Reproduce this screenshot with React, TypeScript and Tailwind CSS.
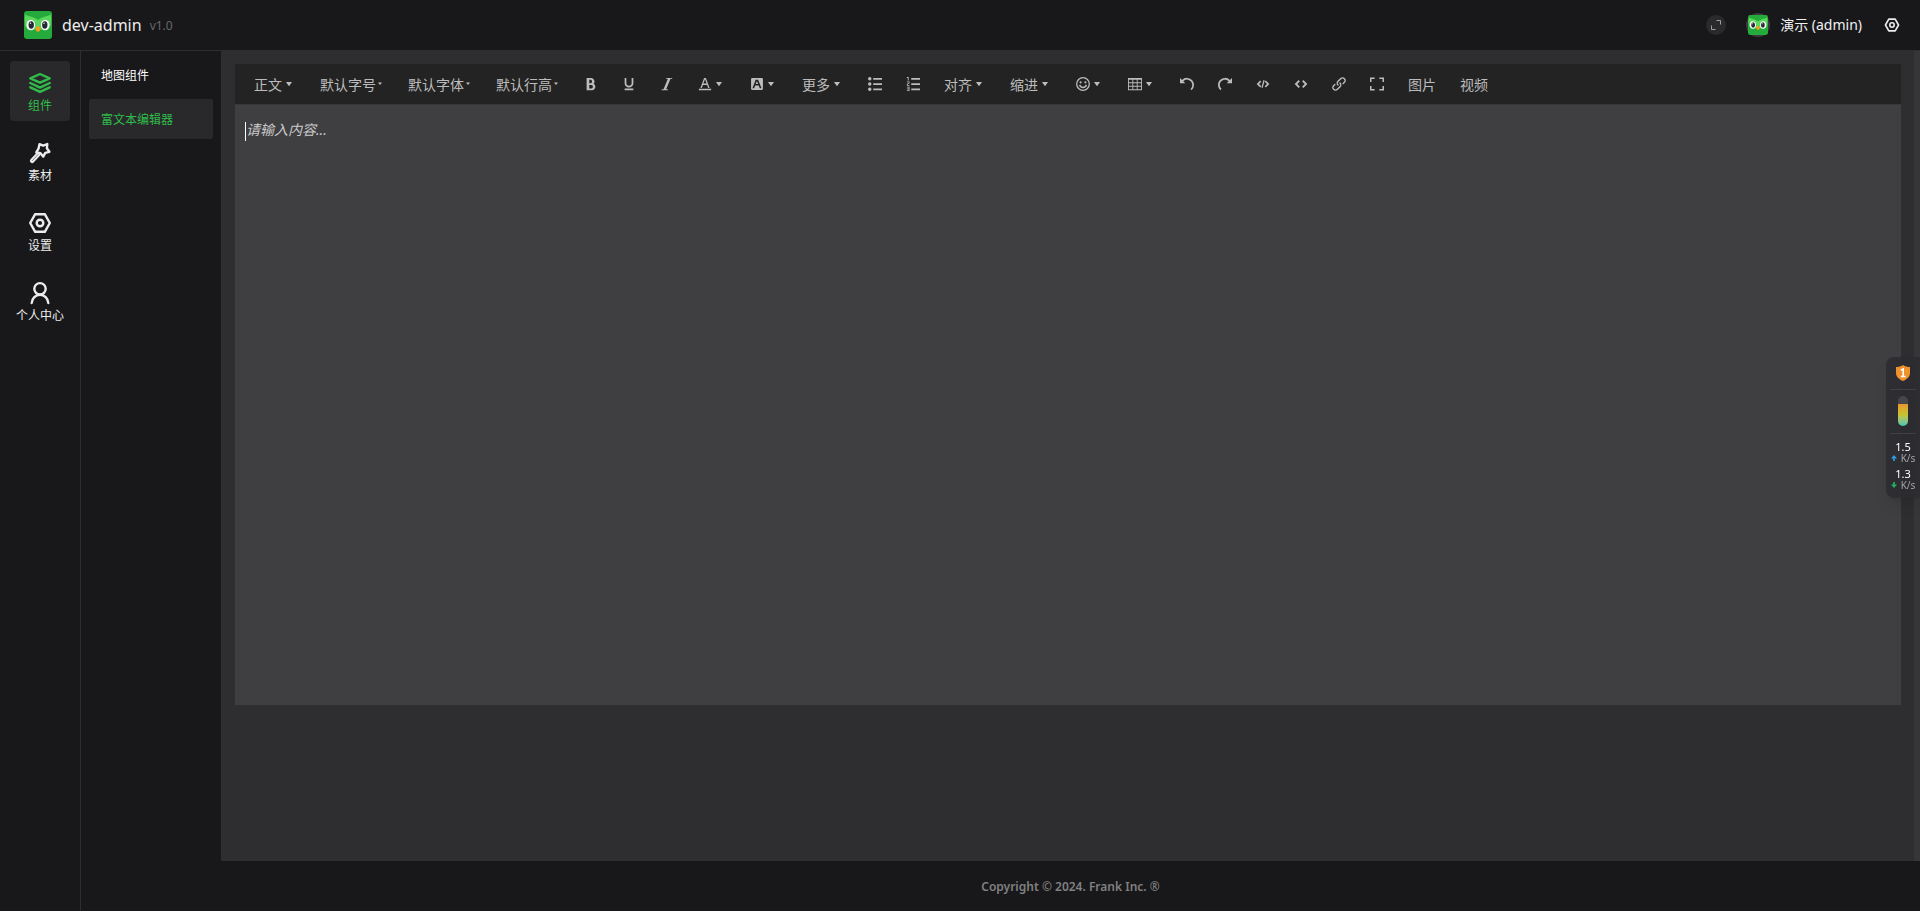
import type { ReactNode } from "react";

const ARROW =
  "M498.7 655.8l-197.6-268c-8.1-10.9-0.3-26.4 13.3-26.4h395.2c13.6 0 21.4 15.4 13.3 26.4l-197.6 268c-6.6 9-20 9-26.6 0z";

const PATHS = {
  bold: "M707.872 484.64A254.88 254.88 0 0 0 768 320c0-141.152-114.848-256-256-256H192v896h384c141.152 0 256-114.848 256-256a256.096 256.096 0 0 0-124.128-219.36zM384 192h101.504c55.968 0 101.504 57.408 101.504 128s-45.536 128-101.504 128H384V192z m159.008 640H384v-256h159.008c58.464 0 106.016 57.408 106.016 128s-47.552 128-106.016 128z",
  underline:
    "M704 64l128 0 0 416c0 159.072-143.264 288-320 288-176.736 0-320-128.928-320-288l0-416 128 0 0 416c0 40.16 18.24 78.688 51.36 108.512 36.896 33.216 86.848 51.488 140.64 51.488 53.792 0 103.744-18.304 140.64-51.488 33.12-29.792 51.36-68.352 51.36-108.512l0-416zM192 832l640 0 0 128-640 0z",
  italic: "M896 64v64h-128L448 896h128v64H128v-64h128L576 128h-128V64z",
  color:
    "M64 864h896v96H64zM360.58 576h302.85l81.53 224h102.16L579.24 64H444.77L176.89 800h102.16l81.53-224zM512 159.96L628.49 480H395.52L512 159.96z",
  background:
    "M510.03 315.08l84.68 196.92h-177.23l76.8-196.92h15.75zM945.23 157.54v708.92c0 43.32-35.45 78.77-78.77 78.77H157.54c-43.32 0-78.77-35.45-78.77-78.77V157.54c0-43.32 35.45-78.77 78.77-78.77h708.92c43.32 0 78.77 35.45 78.77 78.77z m-108.31 643.94L600.62 216.62c-5.91-11.82-15.75-19.7-29.54-19.7h-139.82c-11.81 0-23.63 7.88-27.57 19.7l-216.61 584.86c-3.94 11.81 3.94 25.6 17.72 25.6h80.74c11.81 0 23.63-9.85 27.57-21.66l63.01-175.26h263.88l68.92 175.26c3.94 11.81 15.76 21.66 27.57 21.66h80.74c11.81 0 23.63-11.82 19.69-25.6z",
  bullets:
    "M384 64h640v128H384V64z m0 384h640v128H384v-128z m0 384h640v128H384v-128zM0 128a128 128 0 1 1 256 0 128 128 0 0 1-256 0z m0 384a128 128 0 1 1 256 0 128 128 0 0 1-256 0z m0 384a128 128 0 1 1 256 0 128 128 0 0 1-256 0z",
  numbers:
    "M384 832h640v128H384z m0-384h640v128H384z m0-384h640v128H384zM192 0v256H128V64H64V0zM128 526.016v50.016h128v64H64v-146.016l128-60V384H64v-64h192v146.016zM256 704v320H64v-64h128v-64H64v-64h128v-64H64v-64z",
  table:
    "M0 64v896h1024V64H0z m384 576v-192h256v192h-256z m256 64v192h-256v-192h256z m0-512v192h-256V192h256zM320 192v192H64V192h256z m-256 256h256v192H64v-192z m640 0h256v192h-256v-192z m0-64V192h256v192h-256zM64 704h256v192H64v-192z m640 192v-192h256v192h-256z",
  undo: "M512 64A510.272 510.272 0 0 0 149.984 213.984L0.032 64v384h384L240.512 304.48A382.784 382.784 0 0 1 512.032 192c212.064 0 384 171.936 384 384 0 114.688-50.304 217.632-130.016 288l84.672 96a510.72 510.72 0 0 0 173.344-384c0-282.784-229.216-512-512-512z",
  redo: "M0 576a510.72 510.72 0 0 0 173.344 384l84.672-96A383.136 383.136 0 0 1 128 576C128 363.936 299.936 192 512 192c106.048 0 202.048 42.976 271.52 112.48L640 448h384V64l-149.984 149.984A510.272 510.272 0 0 0 512 64C229.216 64 0 293.216 0 576z",
  code: "M304 260l84 84-168 168 168 168-84 84L48 512zM720 260l-84 84 168 168-168 168 84 84 256-252zM544 228l90 24-148 548-90-24z",
  codeBlock: "M592 704l96 96 288-288-288-288-96 96 192 192zM432 320l-96-96L48 512l288 288 96-96-192-192z",
  link: "M440.224 635.776a51.84 51.84 0 0 1-36.768-15.232c-95.136-95.136-95.136-249.92 0-345.056l192-192C641.536 37.408 702.816 12.032 768 12.032s126.432 25.376 172.544 71.456c95.136 95.136 95.136 249.92 0 345.056l-87.776 87.776a51.968 51.968 0 1 1-73.536-73.536l87.776-87.776a140.16 140.16 0 0 0 0-197.984c-26.432-26.432-61.6-40.992-99.008-40.992s-72.544 14.56-99.008 40.992l-192 192a140.16 140.16 0 0 0 0 197.984 51.968 51.968 0 0 1-36.768 88.768zM256 1012a242.4 242.4 0 0 1-172.544-71.456c-95.136-95.136-95.136-249.92 0-345.056l87.776-87.776a51.968 51.968 0 1 1 73.536 73.536l-87.776 87.776a140.16 140.16 0 0 0 0 197.984c26.432 26.432 61.6 40.992 99.008 40.992s72.544-14.56 99.008-40.992l192-192a140.16 140.16 0 0 0 0-197.984 51.968 51.968 0 1 1 73.536-73.536c95.136 95.136 95.136 249.92 0 345.056l-192 192A242.4 242.4 0 0 1 256 1012z",
  fullscreen:
    "M0 32h340v110H110v230H0zM684 32h340v340H914V142H684zM0 652h110v230h230v110H0zM914 652h110v340H684V882h230z",
};

function Glyph({ d }: { d: string }) {
  return (
    <svg className="size-3.5 shrink-0" viewBox="0 0 1024 1024" fill="currentColor" aria-hidden="true">
      <path d={d} />
    </svg>
  );
}

function SmileGlyph() {
  return (
    <svg className="size-3.5 shrink-0" viewBox="0 0 14 14" fill="none" stroke="currentColor" aria-hidden="true">
      <circle cx="7" cy="7" r="6.300" strokeWidth="1.300" />
      <circle cx="4.600" cy="5.300" r="1.100" fill="currentColor" stroke="none" />
      <circle cx="9.400" cy="5.300" r="1.100" fill="currentColor" stroke="none" />
      <path d="M3.700 7.900a3.400 3.400 0 0 0 6.600 0" strokeWidth="1.500" />
    </svg>
  );
}

function Owl({ className }: { className: string }) {
  return (
    <svg className={className} viewBox="0 0 28 28" aria-hidden="true">
      <rect width="28" height="28" rx="3" fill="#25ab3b" />
      <path
        d="M1.500 3.500C5 6 9.500 5.200 14 9c4.500-3.800 9-3 12.500-5.500 1 3.500.8 6 .4 8.500.3 6-5.400 8.500-9.400 6.500h-7C6.500 20.500.8 18 1.100 12c-.4-2.500-.6-5 .4-8.500z"
        fill="#5bd75c"
      />
      <ellipse cx="6.800" cy="14" rx="4.300" ry="5.300" fill="#fff" />
      <ellipse cx="21.200" cy="14" rx="4.300" ry="5.300" fill="#fff" />
      <ellipse cx="7.200" cy="14" rx="2.700" ry="3.700" fill="#222a34" />
      <ellipse cx="20.800" cy="14" rx="2.700" ry="3.700" fill="#222a34" />
      <circle cx="6.500" cy="12.300" r="0.700" fill="#fff" />
      <circle cx="20" cy="12.300" r="0.700" fill="#fff" />
      <path d="M11.500 17c.5-2 4.500-2 5 0 .3 1.500-1.200 3.700-2.500 4-1.300-.3-2.800-2.500-2.500-4z" fill="#f59a23" />
    </svg>
  );
}

function Stroke({ children, className = "size-6" }: { children: ReactNode; className?: string }) {
  return (
    <svg
      className={className}
      viewBox="0 0 24 24"
      fill="none"
      stroke="currentColor"
      strokeWidth="2.400"
      strokeLinejoin="round"
      strokeLinecap="round"
      aria-hidden="true"
    >
      {children}
    </svg>
  );
}

function HexGear({ className }: { className?: string }) {
  return (
    <Stroke className={className}>
      <path d="M7.200 3.200h9.600L21.800 12l-5 8.800H7.200L2.200 12z" />
      <circle cx="12" cy="12" r="3.300" />
    </Stroke>
  );
}

const MODULES = [
  {
    label: "组件",
    active: true,
    icon: (
      <Stroke>
        <path d="M12 3 21.700 7.300 12 11.700 2.300 7.300zM2.300 12l9.700 4.600 9.700-4.600M2.300 16.300l9.700 4.600 9.700-4.600" />
      </Stroke>
    ),
  },
  {
    label: "素材",
    active: false,
    icon: (
      <Stroke>
        <path d="M11.500 3.200l3.700 1.500L19.300 3l-.4 4.300 2.500 3.500-4.100 1.100-2.100 3.700-2.700-3.400-4.200-.8L10.500 7.700z" />
        <path d="M10.300 13.300 4.200 19.800" strokeWidth="4.600" />
        <path d="M10 13.600 4.500 19.500" strokeWidth="0.900" className="stroke-[#77777a]" />
      </Stroke>
    ),
  },
  { label: "设置", active: false, icon: <HexGear className="size-6" /> },
  {
    label: "个人中心",
    active: false,
    icon: (
      <Stroke>
        <circle cx="12" cy="7.800" r="5.700" />
        <path d="M3.700 22c.3-4.800 3.900-8.300 8.300-8.300s8 3.500 8.300 8.300" />
      </Stroke>
    ),
  },
];

type Tool = { name: string; text?: string; icon?: ReactNode; kind?: "drop" | "select" };

const TOOLS: Tool[] = [
  { name: "正文", text: "正文", kind: "drop" },
  { name: "默认字号", text: "默认字号", kind: "select" },
  { name: "默认字体", text: "默认字体", kind: "select" },
  { name: "默认行高", text: "默认行高", kind: "select" },
  { name: "粗体", icon: <Glyph d={PATHS.bold} /> },
  { name: "下划线", icon: <Glyph d={PATHS.underline} /> },
  { name: "斜体", icon: <Glyph d={PATHS.italic} /> },
  { name: "文字颜色", icon: <Glyph d={PATHS.color} />, kind: "drop" },
  { name: "背景色", icon: <Glyph d={PATHS.background} />, kind: "drop" },
  { name: "更多", text: "更多", kind: "drop" },
  { name: "无序列表", icon: <Glyph d={PATHS.bullets} /> },
  { name: "有序列表", icon: <Glyph d={PATHS.numbers} /> },
  { name: "对齐", text: "对齐", kind: "drop" },
  { name: "缩进", text: "缩进", kind: "drop" },
  { name: "表情", icon: <SmileGlyph />, kind: "drop" },
  { name: "表格", icon: <Glyph d={PATHS.table} />, kind: "drop" },
  { name: "撤销", icon: <Glyph d={PATHS.undo} /> },
  { name: "重做", icon: <Glyph d={PATHS.redo} /> },
  { name: "行内代码", icon: <Glyph d={PATHS.code} /> },
  { name: "代码块", icon: <Glyph d={PATHS.codeBlock} /> },
  { name: "链接", icon: <Glyph d={PATHS.link} /> },
  { name: "全屏", icon: <Glyph d={PATHS.fullscreen} /> },
  { name: "图片", text: "图片" },
  { name: "视频", text: "视频" },
];

function Toolbar() {
  return (
    <div className="flex min-h-10 flex-wrap items-center border-b border-[#373739] bg-[#232323] px-[7px] text-[#bcbcbc]">
      {TOOLS.map((tool) => (
        <button
          key={tool.name}
          type="button"
          aria-label={tool.name}
          className="flex h-10 shrink-0 items-center px-3 text-sm"
        >
          {tool.icon}
          {tool.text && <span className="pt-px">{tool.text}</span>}
          {tool.kind === "drop" && <Glyph d={ARROW} />}
          {tool.kind === "select" && (
            <svg className="h-3.5 w-2 shrink-0" viewBox="0 0 8 14" fill="currentColor" aria-hidden="true">
              <path d="M2 5.500h4L4 8z" />
            </svg>
          )}
        </button>
      ))}
    </div>
  );
}

function Speed({ value, up }: { value: string; up: boolean }) {
  return (
    <div className="flex flex-col items-center">
      <span className="text-[11px] leading-3 text-white">{value}</span>
      <span className="flex items-center gap-1 text-[10px] leading-[10px] text-[#a5a5a8]">
        <svg className="size-1.5 shrink-0" viewBox="0 0 7 7" aria-hidden="true">
          {up ? (
            <path d="M3.500 0 7 4H4.500v3h-2V4H0z" fill="#2e9be6" />
          ) : (
            <path d="M3.500 7 0 3h2.500V0h2v3H7z" fill="#20b35d" />
          )}
        </svg>
        K/s
      </span>
    </div>
  );
}

function SystemMonitor() {
  return (
    <aside className="fixed top-[357px] right-0 flex w-[34px] flex-col items-center rounded-l-lg bg-[#2b2c30]/85 py-2 shadow-lg">
      <svg className="h-4 w-3.5" viewBox="0 0 14 16" aria-hidden="true">
        <path d="M7 0c2 1.400 4.500 2 7 2v6c0 4-3.500 6.500-7 8-3.500-1.500-7-4-7-8V2c2.500 0 5-.6 7-2z" fill="#f0922b" />
        <path d="M4.800 5.200 7.200 4v7.500M4.800 11.500h4.800" stroke="#fff" strokeWidth="1.600" fill="none" />
      </svg>
      <div className="mt-2 h-px w-[26px] bg-[#404145]" />
      <div className="mt-1.5 h-[30px] w-2.5 overflow-hidden rounded-full bg-[#45464b] pt-2">
        <div className="h-full bg-linear-to-b from-[#e8962f] via-[#c4c32f] to-[#38c6b0]" />
      </div>
      <div className="mt-[7px] mb-[7px] h-px w-[26px] bg-[#404145]" />
      <div className="flex flex-col gap-[5px]">
        <Speed value="1.5" up />
        <Speed value="1.3" up={false} />
      </div>
    </aside>
  );
}

export default function App() {
  return (
    <div className="flex min-h-screen flex-col bg-[#18181a] font-['Noto_Sans','Noto_Sans_CJK_SC',sans-serif] text-white">
      <header className="flex h-[51px] items-center border-b border-[#2e2e30] pr-5 pl-6">
        <Owl className="size-7" />
        <h1 className="ml-2.5 text-base text-[#ececed]">dev-admin</h1>
        <span className="ml-2 pt-px text-xs text-[#68686a]">v1.0</span>
        <button
          type="button"
          aria-label="全屏显示"
          className="ml-auto flex size-5 items-center justify-center rounded-full bg-[#2a2a2c] text-[#a0a0a2]"
        >
          <svg className="size-2.5" viewBox="0 0 10 10" fill="none" stroke="currentColor" aria-hidden="true">
            <path d="M5.500.5h4v4M.5 5.500v4h4" />
          </svg>
        </button>
        <button type="button" className="ml-5 flex items-center gap-2.5 text-sm text-[#f0f0f1]">
          <span className="flex size-6 items-center justify-center rounded-full bg-[#3c3c3e]">
            <Owl className="size-5" />
          </span>
          演示 (admin)
        </button>
        <button type="button" aria-label="系统设置" className="ml-[22px] text-[#ececed]">
          <HexGear className="size-4" />
        </button>
      </header>

      <div className="flex flex-1">
        <nav className="flex w-[81px] shrink-0 flex-col items-center gap-2.5 border-r border-[#2e2e30] pt-2.5">
          {MODULES.map((m) => (
            <a
              key={m.label}
              href="#"
              className={
                m.active
                  ? "flex size-[60px] flex-col items-center justify-center gap-[3px] rounded bg-[#29292b] pt-0.5 text-[#30bc4a]"
                  : "flex size-[60px] flex-col items-center justify-center gap-[3px] pt-0.5 text-[#ececed]"
              }
            >
              {m.icon}
              <span className="text-xs whitespace-nowrap">{m.label}</span>
            </a>
          ))}
        </nav>

        <nav className="flex w-[140px] shrink-0 flex-col gap-1 px-2 pt-1 text-xs">
          <a href="#" className="flex h-10 items-center rounded-xs px-3 pt-0.5">
            地图组件
          </a>
          <a href="#" className="flex h-10 items-center rounded-xs bg-[#29292b] px-3 pt-0.5 text-[#30bc4a]">
            富文本编辑器
          </a>
        </nav>

        <div className="flex min-w-0 flex-1 flex-col">
          <main className="flex flex-1 bg-[#2e2e30]">
            <div className="min-w-0 flex-1 px-3.5 pt-[13px] pb-10 pr-[13px]">
              <Toolbar />
              <div
                role="textbox"
                aria-label="编辑区"
                tabIndex={0}
                className="flex min-h-[600px] items-start bg-[#3f3f41] px-2.5 pt-[15px] outline-none"
              >
                <span className="mt-0.5 h-[19px] w-px bg-white" />
                <span className="text-sm leading-5 text-[#c9c9ca] italic">请输入内容...</span>
              </div>
            </div>
            <div className="w-1.5 shrink-0 bg-[#363638]" />
          </main>
          <footer className="flex h-[50px] items-center justify-center pt-0.5 text-xs font-semibold text-[#808082]">
            Copyright © 2024. Frank Inc. ®
          </footer>
        </div>
      </div>
      <SystemMonitor />
    </div>
  );
}
